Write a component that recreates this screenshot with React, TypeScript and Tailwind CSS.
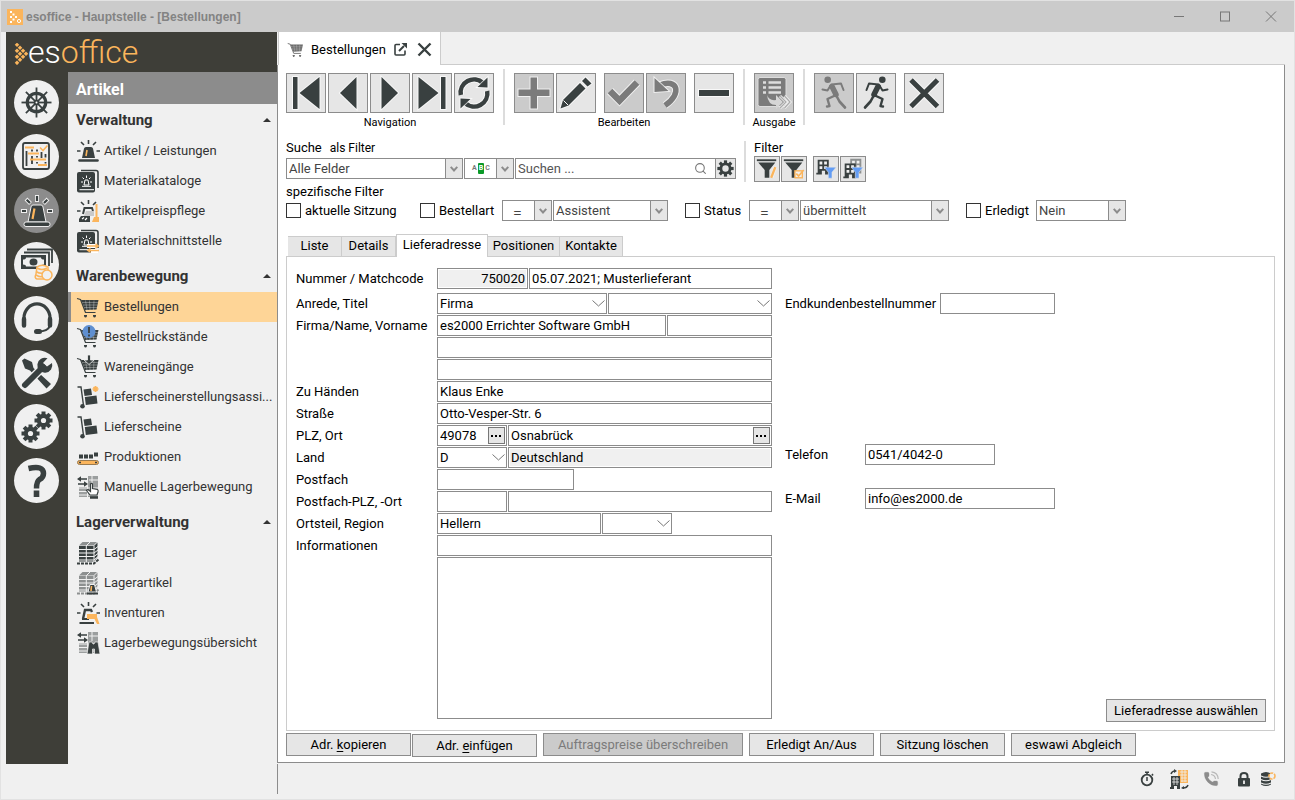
import React, { useState } from 'react';
import { Phone, Search } from 'lucide-react';

const DARK = '#394040';
const ORANGE = '#fbb55c';

interface IconProps {
    size?: number;
    box?: number;
    children: React.ReactNode;
}

const Svg: React.FC<IconProps> = ({ size = 24, box = 24, children }) => (
    <svg width={size} height={size} viewBox={`0 0 ${box} ${box}`} fill="none" aria-hidden="true" className="shrink-0">
        {children}
    </svg>
);

/* ---------- shared drawings ---------- */

const Gear: React.FC<{ cx: number; cy: number; r: number; hole: number; tooth: number; bg: string }> = ({ cx, cy, r, hole, tooth, bg }) => (
    <g>
        {[0, 45, 90, 135].map((a) => (
            <path key={a} d={`M${cx - r} ${cy}H${cx + r}`} stroke={DARK} strokeWidth={tooth} transform={`rotate(${a} ${cx} ${cy})`} />
        ))}
        <circle cx={cx} cy={cy} r={r * 0.74} fill={DARK} />
        <circle cx={cx} cy={cy} r={hole} fill={bg} />
    </g>
);

const SirenShape = () => (
    <g>
        <path d="M6 19L8 9.500Q8.300 8 10 8H15Q16.700 8 17 9.500L19 19Z" fill={DARK} />
        <path d="M3.500 21.500H21.500" stroke={DARK} strokeWidth="2.600" strokeLinecap="round" />
        <path d="M12.500 1V5M5 3L8 6M20 3L17 6M1 12H4.500M20.500 12H24" stroke={DARK} strokeWidth="1.600" />
        <path d="M11 11L10 17" stroke={ORANGE} strokeWidth="1.600" />
    </g>
);

const CartShape: React.FC<{ color?: string }> = ({ color = DARK }) => (
    <g>
        <path d="M1 3.500L4.500 4.500L9.500 17.500H19.500" stroke={color} strokeWidth="1.200" strokeLinejoin="round" />
        <path d="M5 5H22.500L20.500 14.500L9 15Z" fill={color} />
        <path d="M6 7.500H22M7 10H21.500M8 12.500H21M9.500 5.500L11 15M13.500 5.500L14 15M18 5.500L17.500 15" stroke="#fff" strokeOpacity=".5" strokeWidth=".6" />
        <path d="M8 20.500H11M17 20.500H20" stroke={color} strokeWidth="1.200" />
        <circle cx="9.500" cy="21.300" r="1.200" fill={color} />
        <circle cx="18.500" cy="21.300" r="1.200" fill={color} />
    </g>
);

const BookShape = () => (
    <g>
        <path d="M5 1.500H20Q22 1.500 22 3.500V19" stroke={DARK} strokeWidth="1.600" />
        <rect x="1" y="3" width="18" height="20.500" rx="2" fill={DARK} />
        <path d="M3.500 20.700H18" stroke="#fff" strokeWidth="1" />
        <path d="M8 16L9 11H12L13 16ZM6 17.300H15M10.500 6.500V9M6.500 8.500L8 10M14.500 8.500L13 10M5 13H7M14 13H16" stroke="#fff" strokeWidth="1" />
    </g>
);

const ShelfShape: React.FC<{ color?: string }> = ({ color = DARK }) => (
    <g>
        <path d="M6.500 1H21L17.500 4.500H3Z" fill="#8d9090" />
        <path d="M3 5H17.500V20.500H3Z" fill={color} />
        <path d="M18.500 4.500L21.500 1.500V16L18.500 20Z" fill={color} />
        <path d="M3 8.500H18L22 5.500M3 12H18L22 9M3 15.500H18L22 12.500M3 19H18L22 15.500M10.300 5V21M10 5L14 1" stroke="#f0f0f0" strokeWidth="1" />
        <path d="M1 22.500H18L23 18" stroke={color} strokeWidth="2" strokeDasharray="3 1" />
    </g>
);

const TruckShape = () => (
    <g>
        <path d="M1.500 2H5L7.500 20.500" stroke={DARK} strokeWidth="1.400" />
        <circle cx="6.500" cy="21.300" r="2.300" fill={DARK} />
        <path d="M7.500 4.500L15 3.500L16 10L8.500 11Z" fill={DARK} />
        <path d="M8.800 12L20.500 10.500L21.500 18.500L9.800 20Z" fill={DARK} />
    </g>
);

const MoveShape = () => (
    <g>
        <path d="M3 12H11V22H3Z" fill="#9b9e9e" />
        <path d="M12 1H22V22H12Z" fill="#9b9e9e" />
        <path d="M2 13H22M2 16.500H22M2 20H22M13 5H22M16 1V10" stroke="#f0f0f0" strokeWidth="1" />
        <path d="M3 4H11M2 9H10" stroke={DARK} strokeWidth="1.600" />
        <path d="M5 1.300V6.700L1 4ZM8 6.300V11.700L12 9Z" fill={DARK} />
    </g>
);

/* ---------- side menu icons ---------- */

const icons: Record<string, React.ReactNode> = {
    siren: <SirenShape />,
    book: <BookShape />,
    price: (
        <g>
            <path d="M12.500 1V5M5 3L8 6M20 3L17 6M1 12H4.500" stroke={DARK} strokeWidth="1.600" />
            <path d="M7 15L8.500 9H16L17 12" stroke={DARK} strokeWidth="2" />
            <path d="M10 12H18V17H8Z" fill="#c9c9c9" />
            <path d="M5 17H14V23H3V20Z" fill={DARK} />
            <path d="M6 20L8 18.500M9 21L11 19" stroke="#fff" strokeWidth="1.200" />
            <path d="M20.500 5V18" stroke={ORANGE} strokeWidth="2" />
            <path d="M18 18H23V23H16Z" fill={ORANGE} />
        </g>
    ),
    exchange: (
        <g>
            <BookShape />
            <path d="M11 17H19M15 22H22" stroke="#fff" strokeWidth="4" />
            <path d="M11 17H21M13 21.500H23" stroke={ORANGE} strokeWidth="1.600" />
            <path d="M19.500 14V20L23.500 17ZM14.500 18.500V24L10.500 21.500Z" fill={ORANGE} />
        </g>
    ),
    cart: <CartShape />,
    cartAlert: (
        <g>
            <CartShape />
            <circle cx="13" cy="6.500" r="6.500" fill="#5f8fd0" />
            <path d="M13 2V8M13 9.500V11.500" stroke={DARK} strokeWidth="1.800" />
        </g>
    ),
    cartIn: (
        <g>
            <CartShape />
            <path d="M11.500 0H14.500V5H18L13 9.500L8 5H11.500Z" fill={DARK} stroke="#f0f0f0" strokeWidth=".8" />
        </g>
    ),
    truckNew: (
        <g>
            <TruckShape />
            <path d="M19.500 1V7M16.500 4H22.500M17.500 2L21.500 6M21.500 2L17.500 6" stroke={ORANGE} strokeWidth="1.600" />
        </g>
    ),
    truck: <TruckShape />,
    belt: (
        <g>
            <path d="M3 9.500H7V13.500H3ZM8 9.500H12V13.500H8ZM13 9.500H17V13.500H13ZM18 7.500H22V11.500H18Z" fill={DARK} />
            <rect x="1.500" y="15.500" width="21" height="4" rx="2" fill={ORANGE} stroke="#9a7a4e" />
            <path d="M3 17.500H5M19 17.500H21" stroke={DARK} strokeWidth="1.500" />
        </g>
    ),
    moveHand: (
        <g>
            <MoveShape />
            <path d="M14 20L10.500 15.500L12 14.500L14.500 16.500V9Q15.500 7.800 16.500 9V13.500L21.500 14.500Q22.500 15 22 17L21 20Z" fill="#fff" stroke={DARK} strokeWidth="1.200" />
            <path d="M14 22.500H22" stroke={DARK} strokeWidth="2.500" />
        </g>
    ),
    shelf: <ShelfShape />,
    shelfSiren: (
        <g>
            <ShelfShape color="#8d9090" />
            <path d="M12 21L14 13.500H18.500L20.500 21Z" fill={DARK} stroke="#f0f0f0" />
            <path d="M11 22.500H22" stroke={DARK} strokeWidth="2" />
            <path d="M15.500 15L15 20" stroke={ORANGE} strokeWidth="1.600" />
        </g>
    ),
    inventory: (
        <g>
            <path d="M7 18L9 9H15L16 11" stroke={DARK} strokeWidth="2.400" />
            <path d="M3.500 22H18M6 18H13" stroke={DARK} strokeWidth="2.200" />
            <path d="M12.500 1V5M5 3L8 6M20 3L17 6M1 12H4.500M20.500 12H24" stroke={DARK} strokeWidth="1.600" />
            <path d="M11 13H21V16L23.500 23H21L18.500 18H11Z" fill={ORANGE} />
        </g>
    ),
    moveFind: (
        <g>
            <MoveShape />
            <path d="M13 11H16L17 13H18L19 11H22L24 23H18.500V18H16.500V23H11Z" fill={DARK} stroke="#f0f0f0" strokeWidth=".7" />
        </g>
    ),
};

/* ---------- round module buttons ---------- */

const modules: { id: string; label: string; drawing: React.ReactNode }[] = [
    {
        id: 'start',
        label: 'Start',
        drawing: (
            <g stroke={DARK}>
                {[0, 45, 90, 135].map((a) => (
                    <path key={a} d="M7.500 22.500H37.500" strokeWidth="1.800" transform={`rotate(${a} 22.500 22.500)`} />
                ))}
                <circle cx="22.500" cy="22.500" r="9.200" strokeWidth="3.200" />
                <circle cx="22.500" cy="22.500" r="2.500" fill={DARK} />
                <circle cx="22.500" cy="22.500" r="1" fill="#fff" stroke="none" />
            </g>
        ),
    },
    {
        id: 'planung',
        label: 'Planung',
        drawing: (
            <g>
                <rect x="9" y="9" width="26" height="26" rx="2" stroke={DARK} strokeWidth="1.800" />
                <path d="M12.500 17V32M18 15.500V17.500M18 22V30M23 15.500V17.500M23 22V23.500M23 28V29.500M27.500 18V24M31.500 20V23.500M31.500 28V29.500" stroke={DARK} strokeWidth="1.800" />
                <path d="M11 13.500H20M14 19.500H25M16 25.500H32M24 31H33" stroke={ORANGE} strokeWidth="1.800" />
                <path d="M26 13.500L29 16.500L33.500 11.500" stroke={ORANGE} strokeWidth="1.600" />
            </g>
        ),
    },
    {
        id: 'artikel',
        label: 'Artikel',
        drawing: (
            <g>
                <path d="M23 7V14M12 11L16.500 15.500M34 11L29.500 15.500M7 23H13M33 23H39" stroke="#eee" strokeWidth="4" />
                <path d="M23 8V13M12.700 11.700L16 15M33.300 11.700L30 15M8 23H12M34 23H38" stroke={DARK} strokeWidth="2.200" />
                <path d="M14 34L17 19Q17.300 17 19 17H27Q28.700 17 29 19L32 34Z" fill={DARK} stroke="#eee" />
                <rect x="10" y="34" width="26" height="4.500" rx="2" fill={DARK} stroke="#eee" />
                <path d="M20.500 20.500L18.500 31" stroke={ORANGE} strokeWidth="2.200" />
            </g>
        ),
    },
    {
        id: 'finanzen',
        label: 'Finanzen',
        drawing: (
            <g>
                <path d="M13 7.500H38V21M10 10.500H35V24" stroke={DARK} strokeWidth="1.800" />
                <rect x="7" y="13" width="25" height="14" fill={DARK} />
                <path d="M12 15.500H27Q27 17.500 30 17.500V22.500Q27 22.500 27 24.500H12Q12 22.500 9 22.500V17.500Q12 17.500 12 15.500Z" fill="#f0f0f0" />
                <ellipse cx="19.500" cy="20" rx="4" ry="3.500" fill={DARK} />
                <path d="M23 25Q28 21.500 34 25V37H23Q20 36 22 32Z" fill="#f0f0f0" stroke={ORANGE} strokeWidth="1.500" />
                <path d="M23 26Q28 29 33 26M22 29.500Q26 32 29 31M22 33Q26 35.500 29 34.500" stroke={ORANGE} strokeWidth="1.500" />
                <circle cx="33" cy="33" r="5" fill="#f0f0f0" stroke={ORANGE} strokeWidth="1.500" />
            </g>
        ),
    },
    {
        id: 'service',
        label: 'Service',
        drawing: (
            <g stroke={DARK}>
                <path d="M10 26V22A12.500 13.500 0 0 1 36 22V26" strokeWidth="3.200" />
                <path d="M10 23V29.500M36 23V29.500" strokeWidth="4.500" strokeLinecap="round" />
                <path d="M36 29.500Q34 35.500 24 35.500" strokeWidth="2.200" />
                <path d="M22.500 35.500H25.500" strokeWidth="5" strokeLinecap="round" />
            </g>
        ),
    },
    {
        id: 'werkzeuge',
        label: 'Werkzeuge',
        drawing: (
            <g>
                <path d="M8 10.500L10.500 8.500L18 12L19.500 18L25 23L37 34L32.500 38.500L21 26L16 20.500L11 18.500Z" fill={DARK} />
                <path d="M11 35L28 18" stroke="#f0f0f0" strokeWidth="8.500" />
                <path d="M11 35L29 17" stroke={DARK} strokeWidth="6" strokeLinecap="round" />
                <path d="M33.500 8.200A7.500 7.500 0 1 0 38 13L33 16.500L29 13Z" fill={DARK} />
            </g>
        ),
    },
    {
        id: 'einstellungen',
        label: 'Einstellungen',
        drawing: (
            <g>
                <Gear cx={29.5} cy={16.5} r={9} hole={2.6} tooth={4} bg="#f0f0f0" />
                <Gear cx={16.5} cy={29.5} r={9} hole={2.6} tooth={4} bg="#f0f0f0" />
            </g>
        ),
    },
    {
        id: 'hilfe',
        label: 'Hilfe',
        drawing: (
            <g>
                <path d="M14.500 10.500Q29.500 7 29.500 15.500Q29.500 19.500 25.500 21.500Q22.500 23.500 22.500 30.500" stroke={DARK} strokeWidth="5.500" />
                <path d="M19.700 32.500H25.300V39H19.700Z" fill={DARK} />
            </g>
        ),
    },
];

const menu = [
    {
        title: 'Verwaltung',
        items: [
            { label: 'Artikel / Leistungen', icon: 'siren' },
            { label: 'Materialkataloge', icon: 'book' },
            { label: 'Artikelpreispflege', icon: 'price' },
            { label: 'Materialschnittstelle', icon: 'exchange' },
        ],
    },
    {
        title: 'Warenbewegung',
        items: [
            { label: 'Bestellungen', icon: 'cart' },
            { label: 'Bestellrückstände', icon: 'cartAlert' },
            { label: 'Wareneingänge', icon: 'cartIn' },
            { label: 'Lieferscheinerstellungsassi...', icon: 'truckNew' },
            { label: 'Lieferscheine', icon: 'truck' },
            { label: 'Produktionen', icon: 'belt' },
            { label: 'Manuelle Lagerbewegung', icon: 'moveHand' },
        ],
    },
    {
        title: 'Lagerverwaltung',
        items: [
            { label: 'Lager', icon: 'shelf' },
            { label: 'Lagerartikel', icon: 'shelfSiren' },
            { label: 'Inventuren', icon: 'inventory' },
            { label: 'Lagerbewegungsübersicht', icon: 'moveFind' },
        ],
    },
];

/* ---------- controls ---------- */

const ToolButton: React.FC<{ label: string; disabled?: boolean; children: React.ReactNode }> = ({ label, disabled, children }) => (
    <button
        type="button"
        aria-label={label}
        disabled={disabled}
        className="w-10 h-10 border border-[#8c8c8c] bg-[#e6e6e6] text-[#394040] disabled:bg-[#cbcbcb] disabled:text-[#7b7b7b] flex items-center justify-center"
    >
        <svg width="38" height="38" viewBox="1 1 38 38" fill="none" aria-hidden="true">
            {children}
        </svg>
    </button>
);

// outlined solid shape: light halo below, current colour on top
const Solid: React.FC<{ d: string }> = ({ d }) => <path d={d} fill="currentColor" stroke="#fff" strokeWidth="2" strokeOpacity=".7" paintOrder="stroke" />;

const Line: React.FC<{ d: string; w: number }> = ({ d, w }) => (
    <g>
        <path d={d} stroke="#fff" strokeOpacity=".7" strokeWidth={w + 2} />
        <path d={d} stroke="currentColor" strokeWidth={w} />
    </g>
);

const Runner = () => (
    <g stroke="currentColor" strokeLinejoin="round" strokeLinecap="round">
        <circle cx="26.300" cy="6.700" r="3.300" fill="currentColor" stroke="none" />
        <path d="M22.500 11.500L13 10.500L10.500 17" strokeWidth="2" />
        <path d="M23.500 12.500L26.500 17.500L31.500 16.500" strokeWidth="2" />
        <path d="M22 13.500L18 21.500" strokeWidth="5.500" />
        <path d="M17.500 23L14.500 28.500L9 34.500" strokeWidth="2.600" />
        <path d="M19 22.500L26.500 26L24.500 33L27 33.500" strokeWidth="2.400" />
    </g>
);

const Divider = () => <div className="w-[2px] self-stretch bg-[#dcdcdc]"></div>;

interface ComboProps {
    label: string;
    value: string;
    className: string;
    flat?: boolean;
    center?: boolean;
    id?: string;
    children?: React.ReactNode;
}

const Combo: React.FC<ComboProps> = ({ label, value, className, flat, center, id, children }) => (
    <div className={`relative h-[21px] border border-[#8c8c8c] bg-white ${className}`}>
        <select
            id={id}
            aria-label={id ? undefined : label}
            defaultValue={value}
            className={`block w-full h-full appearance-none outline-none ${flat ? 'text-black' : 'text-[#444]'} ${center ? 'pl-[10px] text-base font-light' : 'pl-[2px]'}`}
        >
            <option value={value}>{value}</option>
        </select>
        {children}
        {flat ? (
            <svg width="13" height="7" viewBox="0 0 13 7" fill="none" className="absolute right-[1px] top-[6px] pointer-events-none">
                <path d="M.5 .5L6.500 6L12.500 .5" stroke="#777" />
            </svg>
        ) : (
            <span className="absolute right-0 top-0 w-[17px] h-[19px] bg-[#e6e6e6] border-l border-[#8c8c8c] flex items-center justify-center pointer-events-none">
                <svg width="8" height="6" viewBox="0 0 8 6" fill="none">
                    <path d="M.7 .8L4 4.500L7.300 .8" stroke="#8c8c8c" strokeWidth="2" />
                </svg>
            </span>
        )}
    </div>
);

interface FieldProps {
    label: string;
    id?: string;
    value?: string;
    className: string;
    readOnly?: boolean;
    lookup?: boolean;
}

const Field: React.FC<FieldProps> = ({ label, id, value = '', className, readOnly, lookup }) => (
    <div className={`flex items-center h-[21px] border border-[#8c8c8c] bg-white p-px ${className}`}>
        <input
            id={id}
            aria-label={id ? undefined : label}
            defaultValue={value}
            readOnly={readOnly}
            className="min-w-0 flex-1 h-full px-px outline-none text-black read-only:bg-[#f0f0f0] [text-align:inherit]"
        />
        {lookup && (
            <button type="button" aria-label={`${label} suchen`} className="w-[17px] h-[17px] border border-[#777] bg-[#e6e6e6] flex items-center justify-center">
                <svg width="11" height="2" viewBox="0 0 11 2">
                    <path d="M0 0H2V2H0ZM4 0H6V2H4ZM8 0H10V2H8Z" fill="#000" />
                </svg>
            </button>
        )}
    </div>
);

const Row: React.FC<{ label: string; htmlFor?: string; children: React.ReactNode }> = ({ label, htmlFor, children }) => (
    <div className="flex items-center gap-px">
        <label htmlFor={htmlFor} className="w-[140px] shrink-0 whitespace-nowrap">
            {label}
        </label>
        {children}
    </div>
);

const Check: React.FC<{ label: string; className: string }> = ({ label, className }) => (
    <label className={`flex items-center gap-1 whitespace-nowrap ${className}`}>
        <input type="checkbox" className="appearance-none w-[15px] h-[15px] border border-[#333] bg-white checked:bg-[#394040]" />
        {label}
    </label>
);

const PushButton: React.FC<{ className: string; disabled?: boolean; children: React.ReactNode }> = ({ className, disabled, children }) => (
    <button
        type="button"
        disabled={disabled}
        className={`h-[23px] border border-[#8c8c8c] bg-[#e6e6e6] whitespace-nowrap disabled:bg-[#cbcbcb] disabled:text-[#7b7b7b] ${className}`}
    >
        {children}
    </button>
);

const filterButton = 'w-[26px] h-[26px] border border-[#8c8c8c] bg-[#e6e6e6] flex items-center justify-center';

const Funnel = () => (
    <g fill={DARK}>
        <path d="M2 2.500H23V4.500H2Z" />
        <path d="M3.500 6H22L15.500 14V22.500H10.500V14Z" />
    </g>
);

const Building: React.FC<{ x?: number; y?: number; color?: string }> = ({ x = 0, y = 0, color = DARK }) => (
    <g transform={`translate(${x} ${y})`}>
        <path d="M4 3H16V19H12V15H8.500V19H2.500V17H4Z" fill={color} />
        <path d="M6 5H9V8H6ZM11 5H14V8H11ZM6 10H9V13H6ZM11 10H14V13H11Z" fill="#f0f0f0" />
    </g>
);

const BlueFunnel = () => <path d="M11 11H24L19.500 16.500V23H15.500V16.500Z" fill="#629cf4" stroke="#e6e6e6" strokeWidth=".6" />;

/* ---------- page parts ---------- */

const TitleBar = () => (
    <header className="h-[31px] bg-[#cbcbcb] flex items-center pl-1.5 font-['Liberation_Sans',sans-serif]">
        <Svg size={16} box={16}>
            <rect width="16" height="16" fill={ORANGE} />
            <path d="M3 2H5V4H3ZM5.500 4.500H7.500V6.500H5.500ZM8 7H10V9H8ZM5.500 9.500H7.500V11.500H5.500ZM3 12H5V14H3ZM3 7H5V9H3Z" fill="#fff" />
            <circle cx="12" cy="12" r="1.600" stroke="#fff" />
        </Svg>
        <span className="pl-[3px] text-xs font-bold text-[#838383]">esoffice - Hauptstelle - [Bestellungen]</span>
        <div className="ml-auto flex">
            <button type="button" aria-label="Minimieren" className="w-[46px] h-[31px] flex items-center justify-center">
                <Svg size={12} box={12}><path d="M1 5.500H11" stroke="#777" /></Svg>
            </button>
            <button type="button" aria-label="Maximieren" className="w-[46px] h-[31px] flex items-center justify-center">
                <Svg size={12} box={12}><rect x="1.500" y="1" width="9" height="9" stroke="#777" /></Svg>
            </button>
            <button type="button" aria-label="Schließen" className="w-[46px] h-[31px] flex items-center justify-center">
                <Svg size={12} box={12}><path d="M1 .5L11 10.500M11 .5L1 10.500" stroke="#777" /></Svg>
            </button>
        </div>
    </header>
);

const Sidebar: React.FC<{ active: string; onSelect: (label: string) => void }> = ({ active, onSelect }) => (
    <aside className="w-[271px] shrink-0 flex flex-col text-[#333]">
        <div className="h-10 bg-[#3e3e38] flex items-center pl-2">
            <svg width="14" height="22" viewBox="0 0 14 22" aria-hidden="true" className="mt-1">
                {[[3, 3], [6, 6], [9, 9], [3, 9], [12, 12], [6, 12], [9, 15], [3, 15], [6, 18], [3, 21]].map(([x, y]) => (
                    <rect key={`${x}-${y}`} x={x - 1.7} y={y - 2.7} width="3.200" height="3.200" fill={ORANGE} transform={`rotate(45 ${x} ${y - 1})`} />
                ))}
            </svg>
            <span className="text-[32px] leading-[42px] font-light text-white">
                es<span className="text-[#fbb55c]">office</span>
            </span>
        </div>
        <div className="flex flex-1">
            <nav aria-label="Module" className="w-[62px] bg-[#3e3e38] pt-2 pl-2 flex flex-col gap-[9px]">
                {modules.map((m) => (
                    <button
                        key={m.id}
                        type="button"
                        aria-label={m.label}
                        className={`w-[45px] h-[45px] rounded-full ${m.id === 'artikel' ? 'bg-[#8c8c8c]' : 'bg-[#f0f0f0]'}`}
                    >
                        <Svg size={45} box={45}>{m.drawing}</Svg>
                    </button>
                ))}
            </nav>
            <nav aria-label="Artikel" className="flex-1 min-w-0 flex flex-col">
                <h1 className="h-8 bg-[#8c8c8c] pl-2 text-base leading-9 font-bold text-white">Artikel</h1>
                <div className="flex flex-col gap-1">
                    {menu.map((group) => (
                        <section key={group.title}>
                            <h2 className="h-8 pl-2 pr-1.5 flex items-center justify-between text-[15px] font-bold">
                                {group.title}
                                <svg width="8" height="4" viewBox="0 0 8 4"><path d="M0 4L4 0L8 4Z" fill="#333" /></svg>
                            </h2>
                            <ul>
                                {group.items.map((item) => (
                                    <li key={item.label}>
                                        <button
                                            type="button"
                                            onClick={() => onSelect(item.label)}
                                            className={`w-full h-[30px] flex items-center gap-1 pl-[5px] pb-px border-l-[3px] whitespace-nowrap ${
                                                active === item.label ? 'bg-[#fed597] border-[#8c8c8c]' : 'border-transparent'
                                            }`}
                                        >
                                            <Svg>{icons[item.icon]}</Svg>
                                            {item.label}
                                        </button>
                                    </li>
                                ))}
                            </ul>
                        </section>
                    ))}
                </div>
            </nav>
        </div>
    </aside>
);

const Toolbar = () => (
    <div className="flex gap-[9px] h-14 text-[11px]">
        <div className="pt-1">
            <div className="flex gap-[2px]">
                <ToolButton label="Erster">
                    <Solid d="M7 4H11.500V36H7Z" />
                    <Solid d="M13.500 20L33.500 4V36Z" />
                </ToolButton>
                <ToolButton label="Zurück"><Solid d="M12 20L28.500 4V36Z" /></ToolButton>
                <ToolButton label="Weiter"><Solid d="M28 20L11.500 4V36Z" /></ToolButton>
                <ToolButton label="Letzter">
                    <Solid d="M26.500 20L6.500 4V36Z" />
                    <Solid d="M29 4H33.500V36H29Z" />
                </ToolButton>
                <ToolButton label="Aktualisieren">
                    <Line d="M6.800 22A13.300 13.300 0 0 1 29 10" w={4.5} />
                    <Line d="M33.200 18A13.300 13.300 0 0 1 11 30" w={4.5} />
                    <Solid d="M33.500 4.500V14.500L23.500 14Z" />
                    <Solid d="M6.500 35.500V25.500L16.500 26Z" />
                </ToolButton>
            </div>
            <div className="text-center leading-5">Navigation</div>
        </div>
        <Divider />
        <div className="pt-1">
            <div className="flex gap-2">
                <div className="flex gap-[2px]">
                    <ToolButton label="Neu" disabled><Solid d="M16.500 4.500H23V16.500H35.500V23H23V35.500H16.500V23H4.500V16.500H16.500Z" /></ToolButton>
                    <ToolButton label="Ändern">
                        <Solid d="M4.500 35.500L7 27L24 10L29.500 15.500L12.500 32.500Z" />
                        <Solid d="M26 8L29.500 4.500L35.500 10.500L31.500 13.500Z" />
                        <path d="M7.500 27.500L12 32" stroke="#fff" />
                    </ToolButton>
                </div>
                <div className="flex gap-[2px]">
                    <ToolButton label="Speichern" disabled><Line d="M6 18L15.500 27.500L33 9.500" w={6.5} /></ToolButton>
                    <ToolButton label="Verwerfen" disabled>
                        <Line d="M14 12C31 5 37 20 19 32.500" w={5.5} />
                        <Solid d="M8.500 5V19L22.500 18Z" />
                    </ToolButton>
                </div>
                <ToolButton label="Löschen"><Solid d="M5 17H35V23H5Z" /></ToolButton>
            </div>
            <div className="text-center leading-5">Bearbeiten</div>
        </div>
        <Divider />
        <div className="pt-1 w-10 flex flex-col items-center">
            <ToolButton label="Ausgabe" disabled>
                <rect x="4" y="4.500" width="28" height="29" rx="2" fill="currentColor" stroke="#ddd" />
                <path d="M9 9.500H12M9 14.500H12M9 19.500H12M14.500 9.500H27M14.500 14.500H27M14.500 19.500H27" stroke="#ddd" strokeWidth="2.400" />
                <path d="M13 22Q15 28 22 27V22L29 29L22 36V32Q14 32 13 22Z" fill="#d6d6d6" />
                <path d="M26 23L32 29L26 35M30.500 23L36 29L30.500 35" stroke="#eee" strokeWidth="3" />
                <path d="M26 23L32 29L26 35M30.500 23L36 29L30.500 35" stroke="#aaa" strokeWidth="1.200" />
            </ToolButton>
            <div className="leading-5">Ausgabe</div>
        </div>
        <Divider />
        <div className="pt-1 flex gap-2">
            <div className="flex gap-[2px]">
                <ToolButton label="Zurückspringen" disabled>
                    <g transform="matrix(-1 0 0 1 40 0)"><Runner /></g>
                </ToolButton>
                <ToolButton label="Springen"><Runner /></ToolButton>
            </div>
            <ToolButton label="Schließen"><Line d="M7 7L33.500 33.500M33.500 7L7 33.500" w={5} /></ToolButton>
        </div>
    </div>
);

const SearchBar = () => (
    <>
        <div className="flex mt-4">
            <div className="w-[450px] flex flex-col">
                <div className="h-[13px] flex items-center gap-2">
                    <span>Suche</span>
                    <span className="text-xs">als Filter</span>
                </div>
                <div className="flex gap-px mt-1">
                    <Combo label="Suchfeld" value="Alle Felder" className="w-[177px]" />
                    <Combo label="Suchart" value="" className="w-[50px]">
                        <span className="absolute left-[7px] top-[4px] flex items-center text-[7px] leading-[11px] font-bold text-[#777] pointer-events-none">
                            <span>A</span>
                            <span className="px-px mx-px rounded-[1px] bg-[#0a9a28] text-white">B</span>
                            <span>C</span>
                        </span>
                    </Combo>
                    <div className="flex">
                        <div className="w-[200px] h-[21px] border border-[#8c8c8c] border-r-0 flex items-center pl-[2px] pr-2">
                            <input type="search" aria-label="Suchen" placeholder="Suchen ..." className="min-w-0 flex-1 outline-none placeholder:text-[#555]" />
                            <Search size={13} color="#777" strokeWidth={2} />
                        </div>
                        <button type="button" aria-label="Sucheinstellungen" className="w-[21px] h-[21px] border border-[#8c8c8c] bg-[#e6e6e6] flex items-center justify-center">
                            <Svg size={17} box={24}><Gear cx={12} cy={12} r={11.5} hole={4.5} tooth={4.5} bg="#e6e6e6" /></Svg>
                        </button>
                    </div>
                </div>
            </div>
            <div className="pl-2 flex gap-2">
                <Divider />
                <div>
                    <div className="h-[13px] flex items-center">Filter</div>
                    <div className="mt-[2px] flex gap-1.5">
                        <div className="flex gap-px">
                            <button type="button" aria-label="Filter bearbeiten" className={filterButton}>
                                <Svg size={24} box={26}>
                                    <Funnel />
                                    <path d="M22 11L18 22" stroke="#f0f0f0" strokeWidth="4" />
                                    <path d="M22 11L17.500 22.500" stroke={ORANGE} strokeWidth="2.500" />
                                </Svg>
                            </button>
                            <button type="button" aria-label="Filter anwenden" className={filterButton}>
                                <Svg size={24} box={26}>
                                    <Funnel />
                                    <rect x="14" y="15" width="8" height="7.500" fill="#f0f0f0" stroke={ORANGE} strokeWidth="1.500" />
                                    <path d="M15.500 18L18 20.500L23.500 14" stroke={ORANGE} strokeWidth="1.800" />
                                </Svg>
                            </button>
                        </div>
                        <div className="flex gap-px">
                            <button type="button" aria-label="Mandant filtern" className={filterButton}>
                                <Svg size={24} box={26}><Building /><BlueFunnel /></Svg>
                            </button>
                            <button type="button" aria-label="Alle Mandanten filtern" className={filterButton}>
                                <Svg size={24} box={26}>
                                    <Building x={6} y={-1} color="#8d9090" />
                                    <Building x={0} y={4} />
                                    <BlueFunnel />
                                </Svg>
                            </button>
                        </div>
                    </div>
                </div>
            </div>
        </div>
        <div className="mt-[2px] leading-4">spezifische Filter</div>
        <div className="flex items-center">
            <Check label="aktuelle Sitzung" className="w-[134px]" />
            <Check label="Bestellart" className="w-[82px]" />
            <div className="flex gap-px">
                <Combo label="Bestellart Vergleich" value="=" center className="w-[50px]" />
                <Combo label="Bestellart Wert" value="Assistent" className="w-[115px]" />
            </div>
            <Check label="Status" className="w-[64px] ml-[17px]" />
            <div className="flex gap-px">
                <Combo label="Status Vergleich" value="=" center className="w-[50px]" />
                <Combo label="Status Wert" value="übermittelt" className="w-[149px]" />
            </div>
            <Check label="Erledigt" className="w-[70px] ml-[17px]" />
            <Combo label="Erledigt Wert" value="Nein" className="w-[90px]" />
        </div>
    </>
);

const tabs = [
    { name: 'Liste', width: 'w-[54px]' },
    { name: 'Details', width: 'w-[54px]' },
    { name: 'Lieferadresse', width: 'w-[92px]' },
    { name: 'Positionen', width: 'w-[72px]' },
    { name: 'Kontakte', width: 'w-[63px]' },
];

const AddressForm = () => (
    <form className="flex-1 flex flex-col border border-[#ccc] pl-[9px] pr-2 pt-[11px] pb-2" onSubmit={(e) => e.preventDefault()}>
        <div className="flex flex-1 gap-[13px]">
            <div className="w-[476px] flex flex-col gap-px">
                <div className="mb-[3px]">
                    <Row label="Nummer / Matchcode" htmlFor="nummer">
                        <Field id="nummer" label="Nummer" value="750020" readOnly className="w-[91px] text-right" />
                        <Field label="Matchcode" value="05.07.2021; Musterlieferant" className="w-[243px]" />
                    </Row>
                </div>
                <Row label="Anrede, Titel" htmlFor="anrede">
                    <Combo id="anrede" label="Anrede" value="Firma" flat className="w-[170px]" />
                    <Combo label="Titel" value="" flat className="w-[164px]" />
                </Row>
                <Row label="Firma/Name, Vorname" htmlFor="firma">
                    <Field id="firma" label="Firma" value="es2000 Errichter Software GmbH" className="w-[229px]" />
                    <Field label="Vorname" className="w-[105px]" />
                </Row>
                <Row label=""><Field label="Name 2" className="flex-1" /></Row>
                <Row label=""><Field label="Name 3" className="flex-1" /></Row>
                <Row label="Zu Händen" htmlFor="zh"><Field id="zh" label="Zu Händen" value="Klaus Enke" className="flex-1" /></Row>
                <Row label="Straße" htmlFor="str"><Field id="str" label="Straße" value="Otto-Vesper-Str. 6" className="flex-1" /></Row>
                <Row label="PLZ, Ort" htmlFor="plz">
                    <Field id="plz" label="PLZ" value="49078" lookup className="w-[70px]" />
                    <Field label="Ort" value="Osnabrück" lookup className="flex-1" />
                </Row>
                <Row label="Land" htmlFor="land">
                    <Combo id="land" label="Land" value="D" flat className="w-[70px]" />
                    <Field label="Landname" value="Deutschland" readOnly className="flex-1" />
                </Row>
                <Row label="Postfach" htmlFor="pf"><Field id="pf" label="Postfach" className="w-[137px]" /></Row>
                <Row label="Postfach-PLZ, -Ort" htmlFor="pfplz">
                    <Field id="pfplz" label="Postfach-PLZ" className="w-[70px]" />
                    <Field label="Postfach-Ort" className="flex-1" />
                </Row>
                <Row label="Ortsteil, Region" htmlFor="ortsteil">
                    <Field id="ortsteil" label="Ortsteil" value="Hellern" className="w-[164px]" />
                    <Combo label="Region" value="" flat className="w-[70px]" />
                </Row>
                <Row label="Informationen" htmlFor="info"><Field id="info" label="Informationen" className="flex-1" /></Row>
                <textarea aria-label="Informationstext" className="flex-1 ml-[141px] mb-[3px] border border-[#8c8c8c] resize-none outline-none"></textarea>
            </div>
            <div className="flex-1 pt-[25px] flex flex-col">
                <div className="flex items-center">
                    <label htmlFor="ekbn" className="w-[155px]">Endkundenbestellnummer</label>
                    <Field id="ekbn" label="Endkundenbestellnummer" className="w-[115px]" />
                </div>
                <div className="flex items-center mt-[130px]">
                    <label htmlFor="tel" className="w-20">Telefon</label>
                    <Field id="tel" label="Telefon" value="0541/4042-0" className="w-[130px]" />
                </div>
                <div className="flex items-center mt-[23px]">
                    <label htmlFor="mail" className="w-20">E-Mail</label>
                    <Field id="mail" label="E-Mail" value="info@es2000.de" className="w-[190px]" />
                </div>
                <PushButton className="mt-auto ml-auto w-[160px]">Lieferadresse auswählen</PushButton>
            </div>
        </div>
    </form>
);

const StatusBar = () => (
    <footer className="h-[30px] flex items-center justify-end gap-[17px] pr-[18px] mb-[5px] border-l border-[#8c8c8c]">
        <div className="flex items-center gap-[14px]">
            <Svg size={16} box={16}>
                <circle cx="8" cy="9" r="5.300" stroke={DARK} strokeWidth="1.800" />
                <path d="M8 6V10M8 1V3M6 1.200H10M13 3L14 4.500" stroke={DARK} strokeWidth="1.500" />
            </Svg>
            <Svg size={20} box={20}>
                <path d="M9 1H19V14H11V7H9Z" fill={ORANGE} />
                <path d="M11 3H18M11 6H18M12 9H18M12 12H18M13 1V13M16 1V13" stroke="#f0f0f0" strokeWidth=".8" />
                <path d="M2 7H11V20H8V17H5V20H1V18H2Z" fill={DARK} />
                <path d="M3 10H10M3 13H10M5 8V16M8 8V16" stroke="#f0f0f0" strokeWidth=".8" />
                <path d="M2 5Q3 2 6 2M19 16Q18 19 14 19" stroke={DARK} strokeWidth="1.500" />
                <path d="M5 0L8 2L5 4ZM15 17L12 19L15 20.500Z" fill={DARK} />
            </Svg>
            <span className="flex relative">
                <Phone size={16} color="#8c8c8c" fill="#8c8c8c" strokeWidth={0.5} />
                <span className="absolute inset-0">
                    <Svg size={16} box={16}>
                        <path d="M8 3.500Q12 4 12.500 8M8.500 .8Q15 1.500 15.200 8" stroke="#b9b9b9" strokeWidth="1.200" />
                    </Svg>
                </span>
            </span>
        </div>
        <div className="flex items-center gap-2">
            <Svg size={16} box={16}>
                <rect x="2" y="7" width="12" height="8.500" rx="1" fill={DARK} />
                <path d="M4.500 7V5Q4.500 2 8 2Q11.500 2 11.500 5V7" stroke={DARK} strokeWidth="2" />
                <path d="M8 9.500V13" stroke="#f0f0f0" strokeWidth="1.800" />
            </Svg>
            <Svg size={16} box={16}>
                <path d="M1 2.500Q6 -.5 11 2.500V13.500Q6 16.500 1 13.500Z" fill={DARK} />
                <path d="M1 5Q6 7.500 11 5M1 8.500Q6 11 11 8.500M1 12Q6 14.500 11 12" stroke="#f0f0f0" strokeWidth="1.200" />
                <circle cx="12" cy="5" r="3" fill="#f0f0f0" stroke={ORANGE} strokeWidth="1.600" strokeDasharray="3 1" />
            </Svg>
        </div>
    </footer>
);

const App: React.FC = () => {
    const [active, setActive] = useState('Bestellungen');
    const [tab, setTab] = useState('Lieferadresse');

    return (
        <div className="min-h-screen flex flex-col bg-[#f0f0f0] border border-[#e2e2e2] text-[13px] leading-[19px] text-black font-['Roboto',sans-serif]">
            <TitleBar />
            <div className="flex flex-1 pl-[5px]">
                <div className="flex flex-col mb-[35px]">
                    <Sidebar active={active} onSelect={setActive} />
                    <div className="flex-1 w-[62px] bg-[#3e3e38]"></div>
                </div>
                <div className="flex-1 min-w-0 flex flex-col">
                    <div className="flex h-[33px]">
                        <div className="w-[163px] ml-px bg-white border-x border-[#ccc] flex items-center pl-2 pt-px">
                            <Svg size={17} box={24}><CartShape color="#666" /></Svg>
                            <span className="pl-[7px]">Bestellungen</span>
                            <button type="button" aria-label="In neuem Fenster öffnen" className="ml-[7px]">
                                <Svg size={15} box={15}>
                                    <path d="M7 2.500H3Q2 2.500 2 3.500V12Q2 13 3 13H11Q12 13 12 12V8.500" stroke={DARK} strokeWidth="1.600" />
                                    <path d="M6 9L11 4" stroke={DARK} strokeWidth="2" />
                                    <path d="M8.500 1H14V6.500Z" fill={DARK} />
                                </Svg>
                            </button>
                            <button type="button" aria-label="Tab schließen" className="ml-[9px]">
                                <Svg size={15} box={15}><path d="M1.500 1.500L13.500 13.500M13.500 1.500L1.500 13.500" stroke={DARK} strokeWidth="2.400" /></Svg>
                            </button>
                        </div>
                        <div className="flex-1 border-b border-[#ccc] mr-[9px]"></div>
                    </div>
                    <main className="flex-1 mr-[9px] mb-px bg-white border border-t-0 border-[#8c8c8c] pl-2 pr-[9px] pt-1 flex flex-col">
                        <Toolbar />
                        <SearchBar />
                        <div role="tablist" className="mt-[13px] pl-[2px] h-[23px] flex items-end relative z-10 -mb-px">
                            {tabs.map((t) => (
                                <button
                                    key={t.name}
                                    type="button"
                                    role="tab"
                                    aria-selected={tab === t.name}
                                    onClick={() => setTab(t.name)}
                                    className={`border-[#ccc] text-center leading-[18px] whitespace-nowrap ${t.width} ${
                                        tab === t.name ? 'h-[23px] bg-white border border-b-0 pb-[2px]' : 'h-[21px] bg-[#e6e6e6] border-t border-r border-b pb-px'
                                    }`}
                                >
                                    {t.name}
                                </button>
                            ))}
                        </div>
                        <AddressForm />
                        <div className="flex items-start gap-1.5 pt-[2px] h-[31px]">
                            <div className="flex items-start gap-px">
                                <PushButton className="w-[125px]">Adr. <u className="underline-offset-2">k</u>opieren</PushButton>
                                <PushButton className="w-[125px] mt-px">Adr. <u className="underline-offset-2">e</u>infügen</PushButton>
                            </div>
                            <PushButton className="w-[200px]" disabled>Auftragspreise überschreiben</PushButton>
                            <PushButton className="w-[125px]">Erledigt An/Aus</PushButton>
                            <PushButton className="w-[125px]">Sitzung löschen</PushButton>
                            <PushButton className="w-[125px]">eswawi Abgleich</PushButton>
                        </div>
                    </main>
                    <StatusBar />
                </div>
            </div>
        </div>
    );
};

export default App;
